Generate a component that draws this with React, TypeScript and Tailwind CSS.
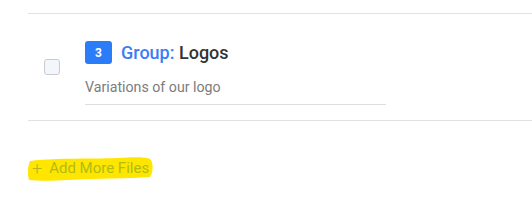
import React from "react";

export default function App() {
  return (
    <div className="w-[532px] h-[207px] bg-white overflow-hidden" style={{ fontFamily: "Roboto, 'Noto Sans', sans-serif" }}>
      <div className="pl-[28px] pt-[13px]">
        <div className="border-t border-b border-[#e2e2e2] h-[108px] flex items-start">
          <div className="w-[57px] pl-[16px] pt-[45px] shrink-0">
            <div className="w-[16px] h-[16px] rounded-[3px] border border-[#c8cbd0] bg-[#f3f6fa]" />
          </div>
          <div className="pt-[27px] flex flex-col">
            <div className="flex items-center h-[23px]">
              <div className="w-[27px] h-[23px] rounded-[3px] bg-[#2b7cf9] text-white text-[12px] font-bold flex items-center justify-center">3</div>
              <div className="ml-[9px] text-[18px] font-medium leading-none">
                <span className="text-[#3a7df6]">Group:</span>
                <span className="text-[#333333]"> Logos</span>
              </div>
            </div>
            <div className="mt-[15px] w-[301px] border-b border-[#dedede] pb-[8px] text-[14.2px] leading-[17px] text-[#7c7c7c]">
              Variations of our logo
            </div>
          </div>
        </div>
        <div className="relative mt-[36px] w-[125px] h-[25px] flex items-center">
          <svg className="absolute left-0 top-0" width="126" height="25" viewBox="0 0 126 25">
            <path d="M2 4 C20 1, 60 2, 90 1 C105 0, 118 0, 122 2 C126 6, 125 16, 122 20 C100 22, 70 21, 40 23 C25 24, 10 24, 1 23 C-1 16, 0 8, 2 4 Z" fill="#ffe600" />
          </svg>
          <div className="relative flex items-center text-[15px] text-[#b2bb12] pl-[4px] -mt-[2px]">
            <span className="text-[18px] font-light leading-none mr-[7px]">+</span>
            <span>Add More Files</span>
          </div>
        </div>
      </div>
    </div>
  );
}
